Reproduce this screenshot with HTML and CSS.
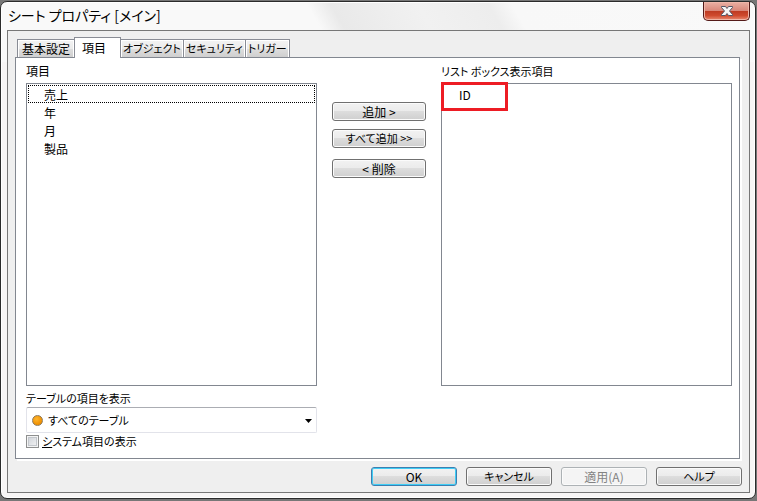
FILE: index.html
```
<!DOCTYPE html>
<html lang="ja">
<head>
<meta charset="utf-8">
<meta name="viewport" content="width=device-width, initial-scale=1">
<title>シート プロパティ [メイン]</title>
<link rel="stylesheet" href="styles.css">
</head>
<body>
<main class="window">
  <header class="titlebar">
    <h1 class="title">シート プロパティ [メイン]</h1>
    <button class="close" type="button" aria-label="閉じる">
      <svg width="14" height="12" viewBox="0 0 14 12" aria-hidden="true">
        <path d="M1.500 1.500h4L7 3.500l1.500-2h4v1L9.500 6l3 3.500v1h-4L7 8.500l-1.500 2h-4v-1L4.500 6l-3-3.500z" fill="#f6f6f6" stroke="#535666"/>
      </svg>
    </button>
  </header>
  <form class="client">
    <div class="tabs" role="tablist">
      <button class="tab" type="button" role="tab">基本設定</button>
      <button class="tab active" type="button" role="tab" aria-selected="true">項目</button>
      <button class="tab kana" type="button" role="tab">オブジェクト</button>
      <button class="tab kana" type="button" role="tab">セキュリティ</button>
      <button class="tab kana" type="button" role="tab">トリガー</button>
    </div>
    <section class="panel" role="tabpanel">
      <div class="column">
        <label class="caption" for="fields">項目</label>
        <select class="list" id="fields" size="10">
          <option class="current">売上</option>
          <option>年</option>
          <option>月</option>
          <option>製品</option>
        </select>
        <label class="caption table-caption kana" for="table">テーブルの項目を表示</label>
        <div class="combo">
          <select class="combo-select kana" id="table"><option>すべてのテーブル</option></select>
          <span class="dot"></span>
          <svg class="arrow" width="7" height="4" viewBox="0 0 7 4" aria-hidden="true"><path d="M0 0h7L3.500 4z"/></svg>
        </div>
        <label class="check kana"><input class="checkbox" type="checkbox"><span><u>シ</u>ステム項目の表示</span></label>
      </div>
      <div class="actions">
        <button class="button" type="button">追加 &gt;</button>
        <button class="button kana" type="button">すべて追加 &gt;&gt;</button>
        <button class="button remove" type="button">&lt; 削除</button>
      </div>
      <div class="column column-right">
        <label class="caption kana" for="shown">リスト ボックス表示項目</label>
        <div class="marked">
          <select class="list" id="shown" size="10"><option>ID</option></select>
          <span class="mark"></span>
        </div>
      </div>
    </section>
    <footer class="footer">
      <button class="button default" type="button">OK</button>
      <button class="button kana" type="button">キャンセル</button>
      <button class="button" type="button" disabled>適用(A)</button>
      <button class="button kana" type="button">ヘルプ</button>
    </footer>
  </form>
</main>
</body>
</html>
```
FILE: styles.css
```
* { box-sizing: border-box; }

body {
  margin: 0;
  height: 100vh;
  padding: 1px 1px 2px 0;
  background: #777;
  color: #000;
  font: 12px/18px "Noto Sans CJK JP", sans-serif;
  font-feature-settings: "palt";
}

button, select, input {
  margin: 0;
  font: inherit;
  font-feature-settings: inherit;
  color: inherit;
}

.window {
  height: 100%;
  display: flex;
  flex-direction: column;
  padding: 0 5px 5px 6px;
  border: 1px solid #2b2b2b;
  border-radius: 7px;
  background: linear-gradient(60deg, #f9f9f9 0 43%, #e9e9e9 46%, #f1f1f1 57%, #ededed 66%, #f8f8f8 69%, #f9f9f9);
  background-size: 100% 60px;
  background-repeat: no-repeat;
  background-color: #f7f5f5;
  box-shadow: inset 0 0 0 1px #fff;
}

.titlebar {
  flex: none;
  height: 28px;
  display: flex;
  justify-content: space-between;
  align-items: flex-start;
}

.title {
  margin: 0;
  padding: 4px 1px;
  font-size: 14px;
  line-height: 18px;
  font-weight: 400;
}

.close {
  width: 47px;
  height: 19px;
  padding: 0;
  display: flex;
  justify-content: center;
  align-items: center;
  border: 1px solid #541a18;
  border-top: 0;
  border-radius: 0 0 5px 5px;
  background: linear-gradient(#eab0a4, #d9887a 48%, #bd3a22 50%, #cf4a2e 75%, #e98b72);
  box-shadow: inset 0 0 0 1px #efb7a9;
}

.client {
  flex: 1;
  min-height: 0;
  display: flex;
  flex-direction: column;
  padding: 6px 7px;
  border: 1px solid #777;
  background: #efefef;
}

.tabs {
  flex: none;
  display: flex;
  align-items: flex-end;
  height: 21px;
  margin-bottom: -1px;
  padding-left: 2px;
  z-index: 1;
}

.tab {
  height: 18px;
  padding: 0 4px;
  margin-right: -1px;
  margin-bottom: 1px;
  line-height: 17px;
  border: 1px solid #898c95;
  border-bottom: 0;
  background: linear-gradient(#f3f3f3, #ebebeb 50%, #dedede 51%, #cfcfcf);
  box-shadow: inset 1px 1px 0 #fff, inset -1px 0 0 #fff;
}

.tab.kana { padding: 0 2px; }

.tab.active {
  height: 21px;
  padding: 0 14px 0 7px;
  margin-bottom: 0;
  line-height: 18px;
  background: #fff;
}

.kana { font-size: 11px; }

.panel {
  flex: 1;
  min-height: 0;
  display: grid;
  grid-template-columns: 1fr 94px 1fr;
  gap: 15px;
  margin-right: 2px;
  padding: 4px 7px 9px 10px;
  border: 1px solid #828790;
  background: #fff;
  box-shadow: 2px 2px 0 #fff;
}

.column {
  min-width: 0;
  display: flex;
  flex-direction: column;
}

.column-right { padding-bottom: 63px; }

.caption {
  flex: none;
  height: 21px;
}

.table-caption { padding-top: 3px; }

.list {
  flex: 1;
  width: 100%;
  min-height: 0;
  padding: 1px;
  border: 1px solid #828790;
  border-radius: 0;
  background: #fff;
  overflow: hidden;
  outline: 0;
}

.list option {
  height: 18px;
  min-height: 18px;
  padding: 0 15px;
  line-height: 14px;
  border: 1px solid transparent;
}

.list .current { border: 1px dotted #000; }

.marked {
  flex: 1;
  display: flex;
  position: relative;
}

.mark {
  position: absolute;
  left: 0;
  top: -1px;
  width: 67px;
  height: 29px;
  border: 3px solid #ed1c24;
  pointer-events: none;
}

.combo {
  flex: none;
  position: relative;
  height: 26px;
}

.combo-select {
  width: 100%;
  height: 100%;
  padding: 0 20px 0 21px;
  appearance: none;
  border: 1px solid #e2e3ea;
  border-top-color: #abadb3;
  border-radius: 2px;
  background: #fff;
}

.dot {
  position: absolute;
  left: 6px;
  top: 8px;
  width: 11px;
  height: 11px;
  border: 1px solid #8e7a5c;
  border-radius: 50%;
  background: radial-gradient(circle at 40% 35%, #ffb52e, #ef9000 70%);
  pointer-events: none;
}

.arrow {
  position: absolute;
  right: 5px;
  top: 12px;
  pointer-events: none;
}

.check {
  flex: none;
  display: flex;
  align-items: center;
  gap: 3px;
  height: 16px;
}

.check u { text-underline-offset: 1px; }

.checkbox {
  width: 13px;
  height: 13px;
  appearance: none;
  border: 1px solid #8e8f8f;
  background: linear-gradient(135deg, #cbcfd5, #f6f6f6);
  box-shadow: inset 0 0 0 1px #f4f4f4, inset 0 0 0 2px #c3c7cc;
}

.actions {
  display: flex;
  flex-direction: column;
  gap: 8px;
  padding-top: 40px;
}

.remove { margin-top: 3px; }

.button {
  height: 19px;
  padding: 0;
  line-height: 17px;
  border: 1px solid #707070;
  border-radius: 3px;
  background: linear-gradient(#f2f2f2, #ebebeb 49%, #dddddd 50%, #cfcfcf);
  box-shadow: inset 0 0 0 1px #fbfbfb;
}

.button.default {
  border-color: #3c7fb1;
  box-shadow: inset 0 0 0 1px #3fcdf5;
}

.button:disabled {
  border-color: #adb2b5;
  background: #f4f4f4;
  color: #838383;
}

.footer {
  flex: none;
  display: flex;
  justify-content: flex-end;
  gap: 9px;
  padding-top: 8px;
}

.footer .button { width: 86px; }
```
